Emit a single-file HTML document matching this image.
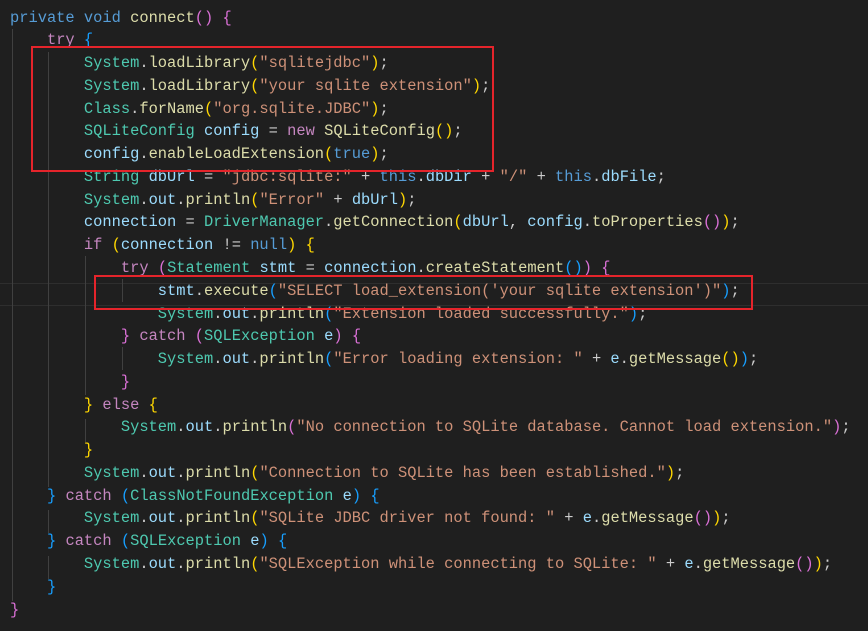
<!DOCTYPE html>
<html><head><meta charset="utf-8"><style>
html,body{margin:0;padding:0;background:#1f1f1f;width:868px;height:631px;overflow:hidden}
#c{position:absolute;left:10px;top:6.6px;font-family:"Liberation Mono",monospace;font-size:15.4px;line-height:22.77px;color:#cccccc;white-space:pre;margin:0}
.k{color:#569cd6}.c{color:#c586c0}.t{color:#4ec9b0}.f{color:#dcdcaa}.v{color:#9cdcfe}.s{color:#ce9178}
.g{color:#ffd700}.o{color:#da70d6}.b{color:#179fff}
.gd{position:absolute;width:1px;background:#404040}
.box{position:absolute;border:2px solid #e5242b;box-sizing:border-box}
.hl{position:absolute;left:0;width:868px;height:1px;background:#2e2e2e}
</style></head><body>
<div class="hl" style="top:283px"></div>
<div class="hl" style="top:305px"></div>
<div class="gd" style="left:12px;top:29px;height:572px"></div>
<div class="gd" style="left:48px;top:52px;height:435px"></div>
<div class="gd" style="left:48px;top:510px;height:23px"></div>
<div class="gd" style="left:48px;top:556px;height:23px"></div>
<div class="gd" style="left:85px;top:256px;height:139px"></div>
<div class="gd" style="left:85px;top:419px;height:23px"></div>
<div class="gd" style="left:122px;top:279px;height:23px"></div>
<div class="gd" style="left:122px;top:347px;height:23px"></div>
<pre id="c"><span class="k">private</span> <span class="k">void</span> <span class="f">connect</span><span class="o">()</span> <span class="o">{</span>
    <span class="c">try</span> <span class="b">{</span>
        <span class="t">System</span>.<span class="f">loadLibrary</span><span class="g">(</span><span class="s">"sqlitejdbc"</span><span class="g">)</span>;
        <span class="t">System</span>.<span class="f">loadLibrary</span><span class="g">(</span><span class="s">"your sqlite extension"</span><span class="g">)</span>;
        <span class="t">Class</span>.<span class="f">forName</span><span class="g">(</span><span class="s">"org.sqlite.JDBC"</span><span class="g">)</span>;
        <span class="t">SQLiteConfig</span> <span class="v">config</span> = <span class="c">new</span> <span class="f">SQLiteConfig</span><span class="g">()</span>;
        <span class="v">config</span>.<span class="f">enableLoadExtension</span><span class="g">(</span><span class="k">true</span><span class="g">)</span>;
        <span class="t">String</span> <span class="v">dbUrl</span> = <span class="s">"jdbc:sqlite:"</span> + <span class="k">this</span>.<span class="v">dbDir</span> + <span class="s">"/"</span> + <span class="k">this</span>.<span class="v">dbFile</span>;
        <span class="t">System</span>.<span class="v">out</span>.<span class="f">println</span><span class="g">(</span><span class="s">"Error"</span> + <span class="v">dbUrl</span><span class="g">)</span>;
        <span class="v">connection</span> = <span class="t">DriverManager</span>.<span class="f">getConnection</span><span class="g">(</span><span class="v">dbUrl</span>, <span class="v">config</span>.<span class="f">toProperties</span><span class="o">()</span><span class="g">)</span>;
        <span class="c">if</span> <span class="g">(</span><span class="v">connection</span> != <span class="k">null</span><span class="g">)</span> <span class="g">{</span>
            <span class="c">try</span> <span class="o">(</span><span class="t">Statement</span> <span class="v">stmt</span> = <span class="v">connection</span>.<span class="f">createStatement</span><span class="b">()</span><span class="o">)</span> <span class="o">{</span>
                <span class="v">stmt</span>.<span class="f">execute</span><span class="b">(</span><span class="s">"SELECT load_extension('your sqlite extension')"</span><span class="b">)</span>;
                <span class="t">System</span>.<span class="v">out</span>.<span class="f">println</span><span class="b">(</span><span class="s">"Extension loaded successfully."</span><span class="b">)</span>;
            <span class="o">}</span> <span class="c">catch</span> <span class="o">(</span><span class="t">SQLException</span> <span class="v">e</span><span class="o">)</span> <span class="o">{</span>
                <span class="t">System</span>.<span class="v">out</span>.<span class="f">println</span><span class="b">(</span><span class="s">"Error loading extension: "</span> + <span class="v">e</span>.<span class="f">getMessage</span><span class="g">()</span><span class="b">)</span>;
            <span class="o">}</span>
        <span class="g">}</span> <span class="c">else</span> <span class="g">{</span>
            <span class="t">System</span>.<span class="v">out</span>.<span class="f">println</span><span class="o">(</span><span class="s">"No connection to SQLite database. Cannot load extension."</span><span class="o">)</span>;
        <span class="g">}</span>
        <span class="t">System</span>.<span class="v">out</span>.<span class="f">println</span><span class="g">(</span><span class="s">"Connection to SQLite has been established."</span><span class="g">)</span>;
    <span class="b">}</span> <span class="c">catch</span> <span class="b">(</span><span class="t">ClassNotFoundException</span> <span class="v">e</span><span class="b">)</span> <span class="b">{</span>
        <span class="t">System</span>.<span class="v">out</span>.<span class="f">println</span><span class="g">(</span><span class="s">"SQLite JDBC driver not found: "</span> + <span class="v">e</span>.<span class="f">getMessage</span><span class="o">()</span><span class="g">)</span>;
    <span class="b">}</span> <span class="c">catch</span> <span class="b">(</span><span class="t">SQLException</span> <span class="v">e</span><span class="b">)</span> <span class="b">{</span>
        <span class="t">System</span>.<span class="v">out</span>.<span class="f">println</span><span class="g">(</span><span class="s">"SQLException while connecting to SQLite: "</span> + <span class="v">e</span>.<span class="f">getMessage</span><span class="o">()</span><span class="g">)</span>;
    <span class="b">}</span>
<span class="o">}</span></pre>
<div class="box" style="left:31px;top:46px;width:463px;height:126px"></div>
<div class="box" style="left:94px;top:275px;width:659px;height:35px"></div>
</body></html>
